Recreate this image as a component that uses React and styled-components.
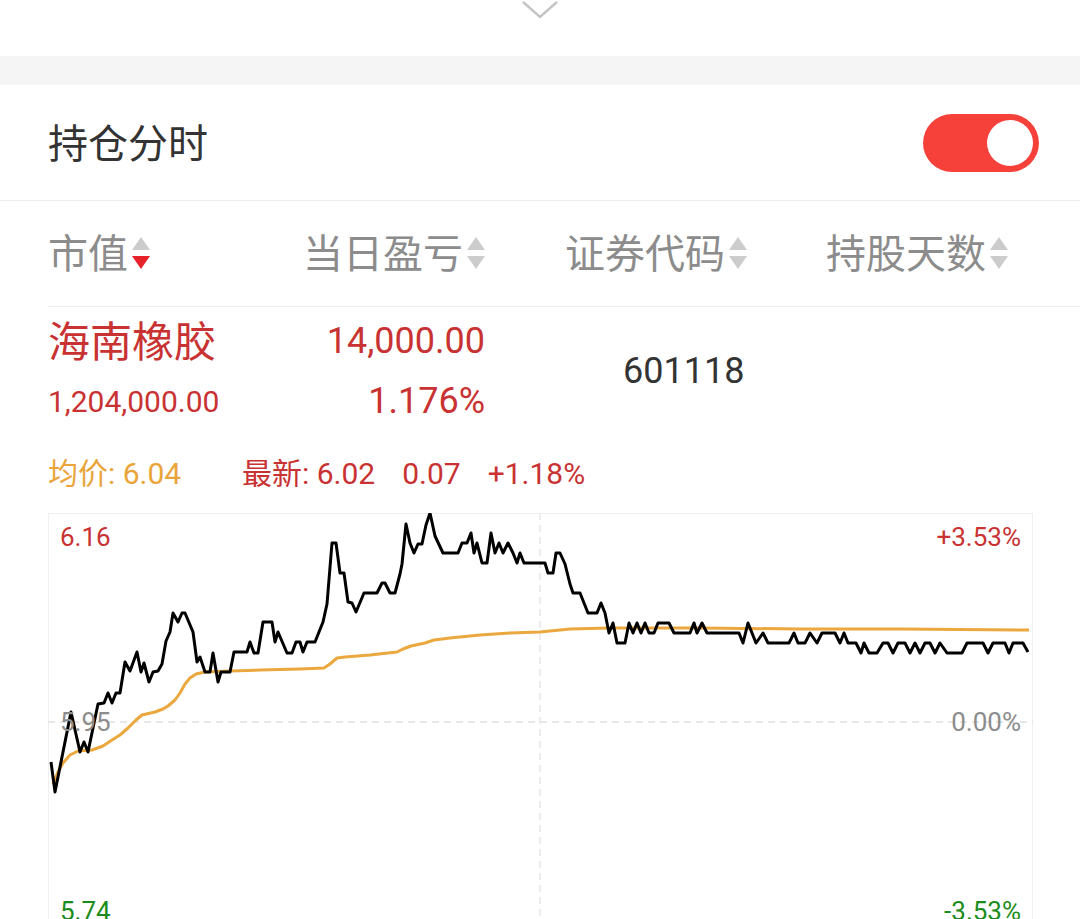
import React from "react";
import styled, { createGlobalStyle } from "styled-components";

const GlobalStyle = createGlobalStyle`
  html, body {
    margin: 0;
    padding: 0;
    background: #fff;
    overflow: hidden;
  }
  body {
    font-family: Roboto, "Noto Sans CJK SC", sans-serif;
  }
`;

const CJK = `"Noto Sans CJK SC", Roboto, sans-serif`;
const NUM = `Roboto, "Noto Sans CJK SC", sans-serif`;

const Page = styled.div`
  width: 1080px;
`;

const TopBar = styled.div`
  height: 56px;
  display: flex;
  justify-content: center;
  align-items: flex-start;
`;

const Band = styled.div`
  height: 29px;
  background: #f5f5f5;
`;

const ToggleRow = styled.div`
  height: 116px;
  display: flex;
  align-items: center;
  justify-content: space-between;
  padding: 0 41px 0 48px;
  border-bottom: 1px solid #ececec;
  box-sizing: border-box;
`;

const Title = styled.div`
  font-family: ${CJK};
  font-size: 40px;
  line-height: 56px;
  margin-top: -3px;
  color: #333;
`;

const Switch = styled.div`
  width: 116px;
  height: 58px;
  border-radius: 29px;
  background: #f5413a;
  display: flex;
  align-items: center;
  justify-content: flex-end;
  padding-right: 6px;
  box-sizing: border-box;
`;

const Knob = styled.div`
  width: 46px;
  height: 46px;
  border-radius: 50%;
  background: #fff;
`;

const HeaderRow = styled.div`
  margin-left: 48px;
  height: 106px;
  padding-bottom: 6px;
  box-sizing: border-box;
  display: grid;
  grid-template-columns: 255px 262px 261px 1fr;
  align-items: center;
  border-bottom: 1px solid #ececec;
`;

const HeaderCell = styled.div`
  display: flex;
  align-items: center;
  font-family: ${CJK};
  font-size: 40px;
  line-height: 56px;
  color: #8c8c8c;
`;

const Arrows = styled.span`
  display: inline-flex;
  flex-direction: column;
  gap: 6px;
  margin-left: 4px;
  margin-top: 4px;
`;

const Tri = styled.span`
  width: 0;
  height: 0;
  border-left: 9px solid transparent;
  border-right: 9px solid transparent;
  ${(p) =>
    p.$up
      ? `border-bottom: 13px solid ${p.$color};`
      : `border-top: 13px solid ${p.$color};`}
`;

const StockRow = styled.div`
  padding: 10px 0 0 48px;
  display: grid;
  grid-template-columns: 255px 182px 1fr;
  grid-template-rows: 48px 48px;
  row-gap: 12px;
  align-items: center;
`;

const Name = styled.div`
  font-family: ${CJK};
  font-size: 42px;
  line-height: 48px;
  margin-top: -5px;
  color: #c93232;
`;

const Num = styled.div`
  font-family: ${NUM};
  font-size: ${(p) => p.$size}px;
  color: ${(p) => p.$color || "#c93232"};
  text-align: ${(p) => (p.$right ? "right" : "left")};
  white-space: nowrap;
`;

const Code = styled(Num)`
  grid-column: 3;
  grid-row: 1 / span 2;
  padding-left: 138px;
`;

const PriceLine = styled.div`
  display: flex;
  align-items: baseline;
  height: 40px;
  margin: 26px 0 22px 48px;
  font-size: 30px;
  line-height: 40px;
  white-space: nowrap;
`;

const Avg = styled.span`
  width: 194px;
  color: #e9a53a;
`;

const Latest = styled.span`
  display: flex;
  align-items: baseline;
  gap: 27px;
  color: #c93232;
`;

const Label = styled.span`
  font-family: ${CJK};
`;

const Chart = styled.div`
  position: relative;
  margin-left: 48px;
  width: 985px;
  height: 418px;
  border: 1px solid #f0f0f0;
  box-sizing: border-box;
`;

const Axis = styled.span`
  position: absolute;
  font-family: ${NUM};
  font-size: 26px;
  line-height: 30px;
  color: ${(p) => p.$color};
  ${(p) => (p.$right ? "right: 11px;" : "left: 11px;")}
  ${(p) => p.$pos}
`;

const Plot = styled.svg`
  position: absolute;
  left: -1px;
  top: -1px;
  width: 985px;
  height: 418px;
`;

const priceLine =
  "51,763 55,793 71,713 80,753 84,743 88,753 98,705 104,704 108,694 112,704 116,694 120,694 125,663 130,672 137,653 141,673 144,664 149,683 153,673 158,672 162,665 166,642 170,633 173,614 178,623 182,614 185,614 193,633 197,663 200,658 205,673 210,673 213,654 218,683 221,673 230,673 234,653 247,653 250,643 254,654 258,654 263,623 272,623 275,643 278,633 287,654 292,654 296,643 300,643 303,653 307,643 315,643 323,623 327,605 332,544 336,544 340,574 344,574 348,603 352,604 356,613 364,594 377,594 382,584 385,584 390,594 395,594 400,575 402,565 406,525 410,544 414,554 418,545 422,545 426,526 430,514 435,537 443,554 458,554 462,544 467,544 471,534 474,554 477,544 482,564 487,564 491,534 495,554 499,544 503,554 508,544 513,554 517,564 520,554 524,564 545,564 548,574 553,574 556,554 560,554 565,565 570,585 573,594 580,594 588,614 597,614 601,604 605,614 609,634 613,624 617,644 625,644 629,624 633,634 637,624 641,634 645,624 649,634 654,634 658,624 669,624 674,634 690,634 694,624 697,634 702,624 707,634 739,634 743,644 748,624 756,644 763,634 768,644 789,644 794,634 798,644 805,644 810,634 817,644 822,634 835,634 840,644 844,634 848,644 856,644 861,654 864,644 869,654 877,654 883,644 888,644 893,654 898,644 905,644 910,654 915,644 920,654 925,644 930,644 935,654 940,644 947,654 962,654 967,644 983,644 988,654 993,644 1005,644 1009,654 1013,644 1023,644 1028,653";

const avgLine =
  "53,785 58,773 63,764 70,756 78,752 92,751 103,747 112,741 120,736 128,729 136,721 142,716 155,713 163,710 168,707 175,701 180,694 185,685 190,679 196,675 205,673 230,672 260,671 300,670 324,669 330,665 337,659 345,658 370,656 397,653 403,650 411,647 425,644 434,641 450,639 480,636 510,634 540,633 570,630 610,629 700,629 800,630 900,630 1029,631";

const headers = [
  { text: "市值", active: true },
  { text: "当日盈亏" },
  { text: "证券代码" },
  { text: "持股天数" },
];

const SortArrows = ({ active }) => (
  <Arrows>
    <Tri $up $color="#cccccc" />
    <Tri $color={active ? "#e8222a" : "#cccccc"} />
  </Arrows>
);

export default function App() {
  return (
    <Page>
      <GlobalStyle />
      <TopBar>
        <svg width="38" height="20" viewBox="0 0 38 20">
          <polyline
            points="2,2 19,17 36,2"
            fill="none"
            stroke="#c4c4c4"
            strokeWidth="2.4"
          />
        </svg>
      </TopBar>
      <Band />
      <ToggleRow>
        <Title>持仓分时</Title>
        <Switch>
          <Knob />
        </Switch>
      </ToggleRow>
      <HeaderRow>
        {headers.map((h) => (
          <HeaderCell key={h.text}>
            {h.text}
            <SortArrows active={h.active} />
          </HeaderCell>
        ))}
      </HeaderRow>
      <StockRow>
        <Name>海南橡胶</Name>
        <Num $size={36} $right>14,000.00</Num>
        <Code $size={36} $color="#333">601118</Code>
        <Num $size={30}>1,204,000.00</Num>
        <Num $size={36} $right>1.176%</Num>
      </StockRow>
      <PriceLine>
        <Avg>
          <Label>均价</Label>: 6.04
        </Avg>
        <Latest>
          <span>
            <Label>最新</Label>: 6.02
          </span>
          <span>0.07</span>
          <span>+1.18%</span>
        </Latest>
      </PriceLine>
      <Chart>
        <Plot viewBox="48 514 985 418">
          <line x1="48" y1="723" x2="1033" y2="723" stroke="#e0e0e0" strokeWidth="1.5" strokeDasharray="7 5" />
          <line x1="540" y1="514" x2="540" y2="932" stroke="#e8e8e8" strokeWidth="1.5" strokeDasharray="7 5" />
          <polyline points={avgLine} fill="none" stroke="#eba83f" strokeWidth="3" strokeLinejoin="round" />
          <polyline points={priceLine} fill="none" stroke="#000" strokeWidth="3" strokeLinejoin="round" />
        </Plot>
        <Axis $color="#c93232" $pos="top: 8px;">6.16</Axis>
        <Axis $color="#c93232" $right $pos="top: 8px;">+3.53%</Axis>
        <Axis $color="#8c8c8c" $pos="top: 193px;">5.95</Axis>
        <Axis $color="#8c8c8c" $right $pos="top: 193px;">0.00%</Axis>
        <Axis $color="#1b8c1b" $pos="bottom: 4px;">5.74</Axis>
        <Axis $color="#1b8c1b" $right $pos="bottom: 4px;">-3.53%</Axis>
      </Chart>
    </Page>
  );
}
